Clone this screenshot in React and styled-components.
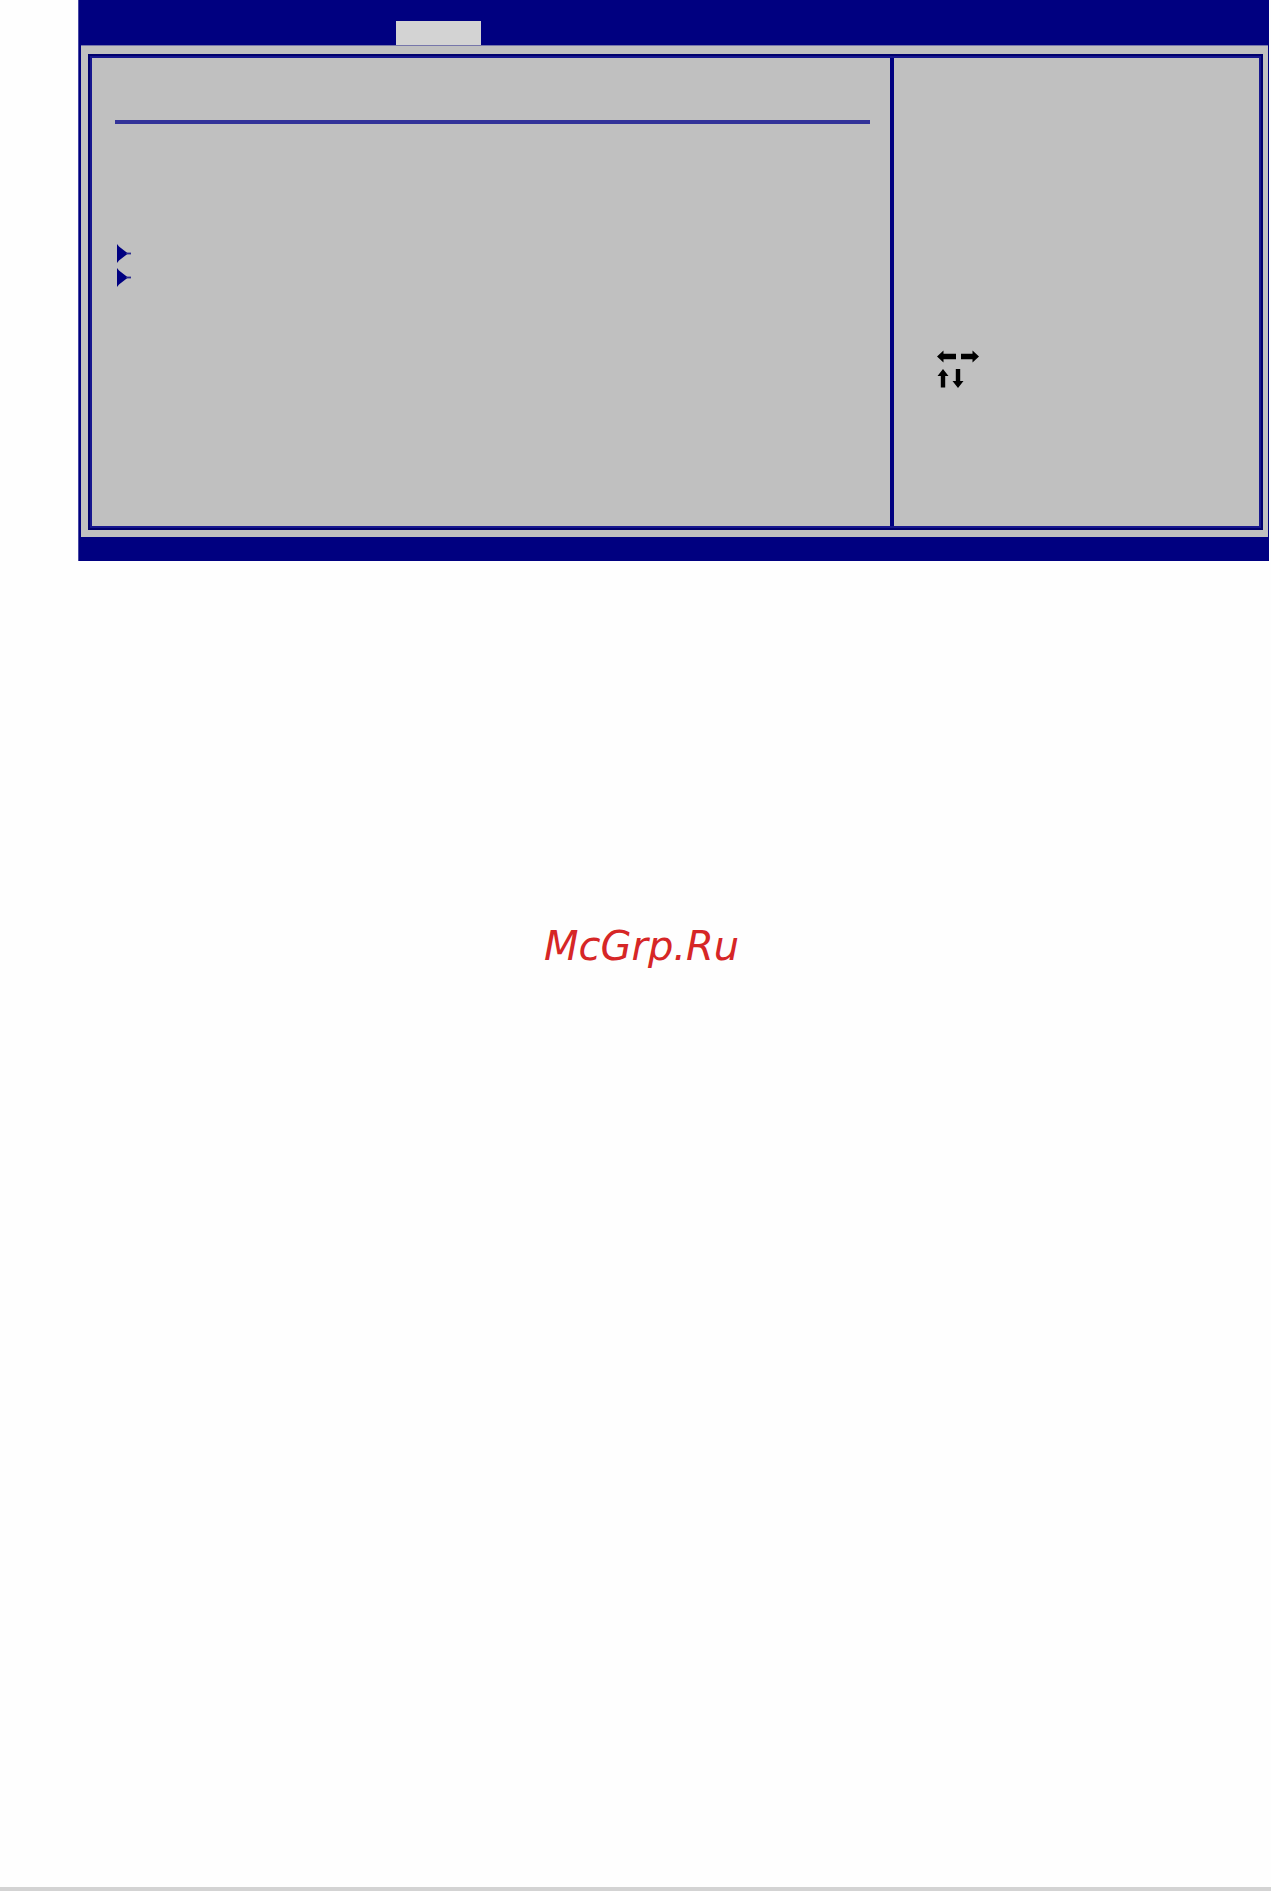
import React from "react";
import styled, { createGlobalStyle } from "styled-components";

const Global = createGlobalStyle`
  html, body { margin: 0; padding: 0; background: #fefefe; }
  #root { width: 1271px; }
`;

const Page = styled.div`
  display: flex;
  flex-direction: column;
  height: 1891px;
  width: 1271px;
  background: #fefefe;
  font-family: "DejaVu Sans", sans-serif;
`;

const Screen = styled.div`
  box-sizing: border-box;
  margin-left: 78px;
  width: 1191px;
  background: #000080;
  border-left: 1px solid #4848a4;
  display: flex;
  flex-direction: column;
`;

const Header = styled.div`
  height: 45px;
  display: flex;
  align-items: flex-end;
  padding-left: 317px;
`;

const Tab = styled.div`
  width: 85px;
  height: 24px;
  background: #d3d3d3;
`;

const Panel = styled.div`
  box-sizing: border-box;
  height: 492px;
  margin: 0 1px 0 2px;
  background: #c0c0c0;
  border-top: 1px solid #7676aa;
  padding: 8px 5px 7px 7px;
  display: flex;
`;

const Frame = styled.div`
  flex: 1;
  display: grid;
  grid-template-columns: 798px 4px 1fr;
  border: 2px solid #00006e;
  box-shadow: inset 0 0 0 2px #16168e;
  padding: 2px;
`;

const LeftPane = styled.div`
  padding: 62px 20px 0 23px;
  display: flex;
  flex-direction: column;
`;

const Rule = styled.div`
  height: 4px;
  background: #333399;
`;

const ItemList = styled.div`
  margin-top: 120px;
  padding-left: 2px;
  display: flex;
  flex-direction: column;
`;

const Item = styled.div`
  height: 24px;
  display: flex;
  align-items: flex-start;
`;

const Divider = styled.div`
  background: #000080;
`;

const RightPane = styled.div`
  padding: 292px 0 0 43px;
  display: flex;
  flex-direction: column;
  gap: 4px;
`;

const Footer = styled.div`
  height: 24px;
  background: #000080;
`;

const Watermark = styled.div`
  margin-top: 366px;
  padding-left: 544px;
  font-family: "DejaVu Sans", "Liberation Sans", sans-serif;
  font-style: oblique;
  font-size: 40px;
  line-height: 39px;
  color: #d62626;
`;

const BottomBar = styled.div`
  margin-top: auto;
  height: 4px;
  background: #d3d3d3;
`;

const Pointer = () => (
  <svg width="14" height="19" viewBox="0 0 14 19">
    <polygon points="0,0 2,2.5 11,9.5 2,16.5 0,19" fill="#000080" />
    <rect x="9" y="8.6" width="5" height="1.8" fill="#2a2a90" />
  </svg>
);

const LeftRight = () => (
  <svg width="43" height="14" viewBox="0 0 43 14">
    <polygon points="0,6.5 6.5,0.5 6.5,3.8 19,3.8 19,9.2 6.5,9.2 6.5,12.5" fill="#000" />
    <polygon points="24,3.8 35.5,3.8 35.5,0.5 42,6.5 35.5,12.5 35.5,9.2 24,9.2" fill="#000" />
  </svg>
);

const UpDown = () => (
  <svg width="28" height="21" viewBox="0 0 28 21">
    <polygon points="6,1 11.5,8 8.2,8 8.2,19.5 3.8,19.5 3.8,8 0.5,8" fill="#000" />
    <polygon points="18.8,1 23.2,1 23.2,13 26.5,13 21,20 15.5,13 18.8,13" fill="#000" />
  </svg>
);

export default function App() {
  return (
    <Page>
      <Global />
      <Screen>
        <Header>
          <Tab />
        </Header>
        <Panel>
          <Frame>
            <LeftPane>
              <Rule />
              <ItemList>
                <Item>
                  <Pointer />
                </Item>
                <Item>
                  <Pointer />
                </Item>
              </ItemList>
            </LeftPane>
            <Divider />
            <RightPane>
              <LeftRight />
              <UpDown />
            </RightPane>
          </Frame>
        </Panel>
        <Footer />
      </Screen>
      <Watermark>McGrp.Ru</Watermark>
      <BottomBar />
    </Page>
  );
}
